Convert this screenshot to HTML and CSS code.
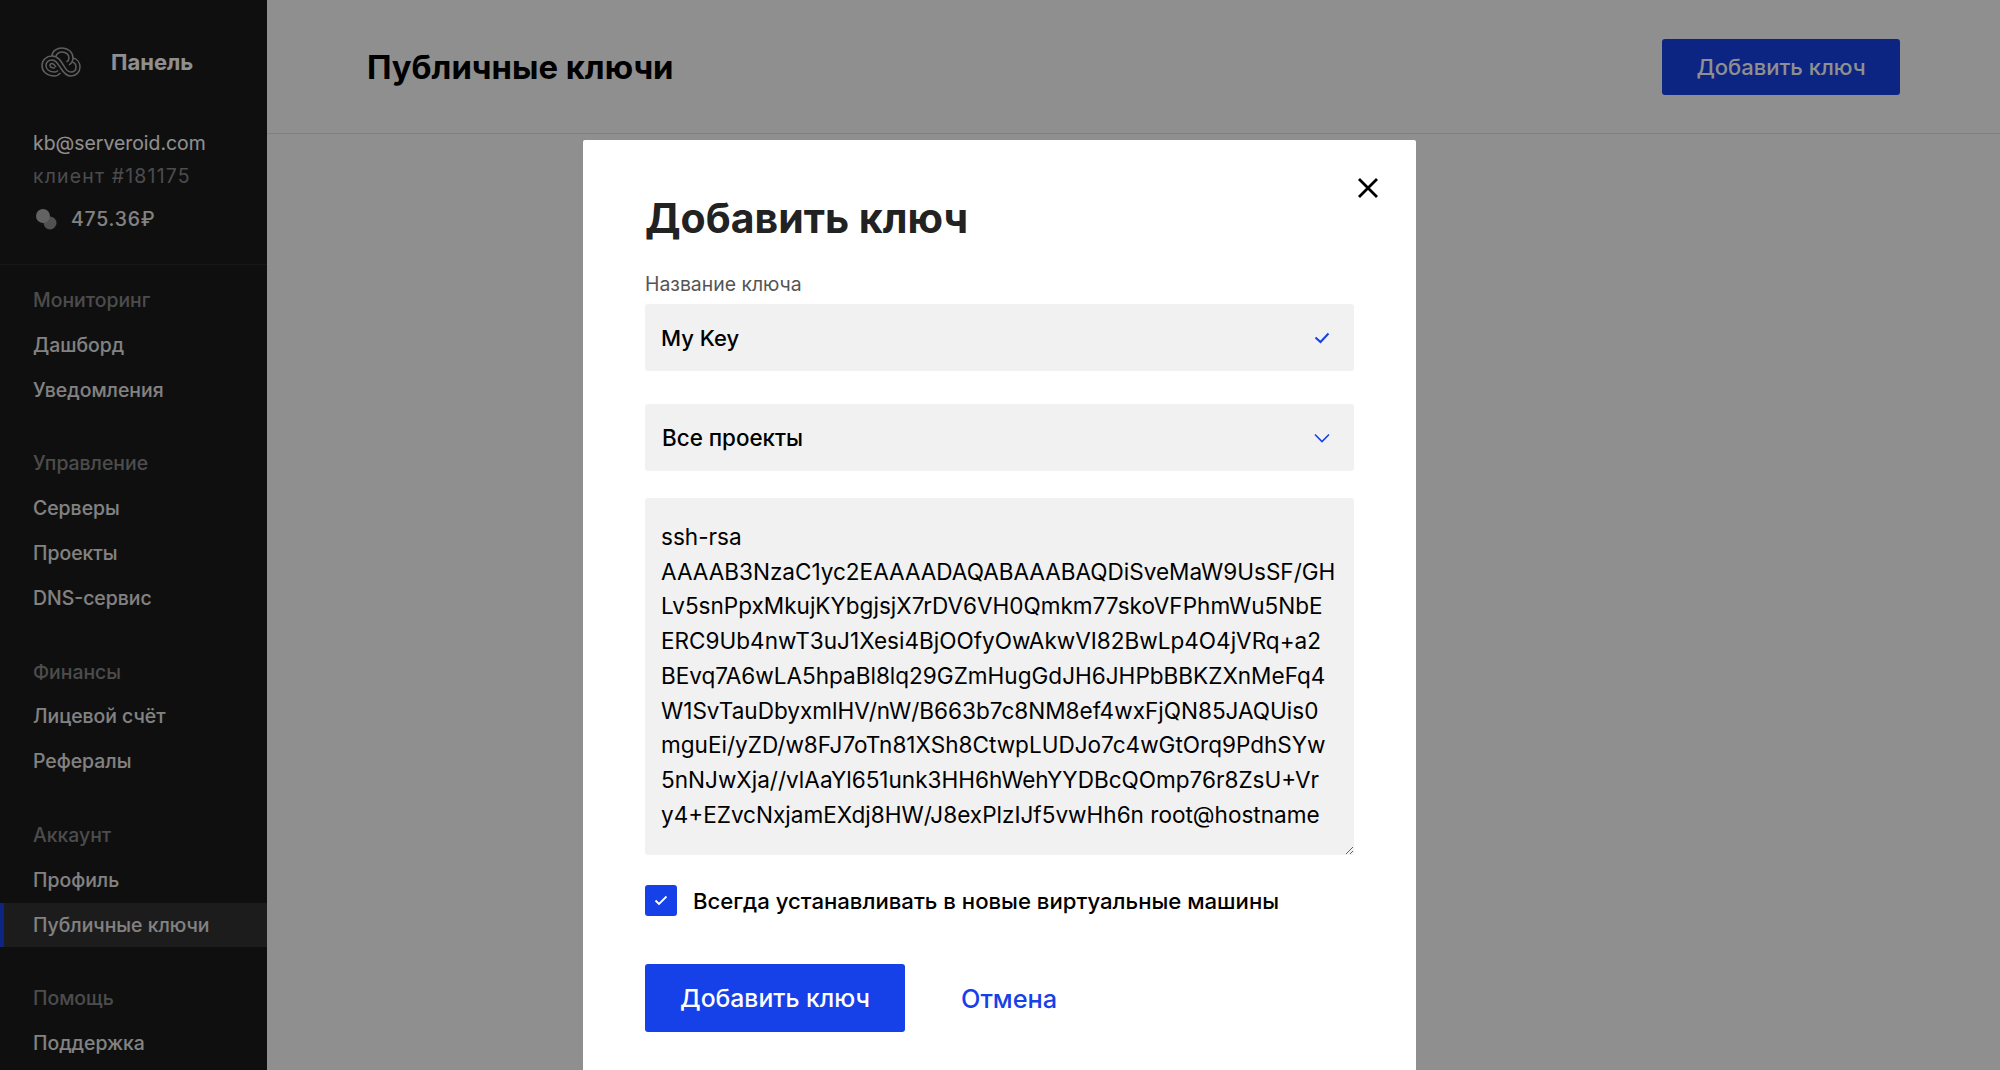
FILE: index.html
```html
<!DOCTYPE html>
<html lang="ru">
<head>
    <meta charset="UTF-8">
    <title>Публичные ключи</title>
    <link rel="stylesheet" href="styles.css">
</head>
<body>
    <aside class="sidebar">
        <div class="brand">
            <svg class="brand-logo" width="40" height="30" viewBox="0 0 40 30" fill="none" stroke="#a8a8a8" stroke-width="1.500">
                <path d="M14 29C5 29 1 24 1 18.500C1 13 5.500 9 11 9C17 9 20 14 23 19C25 23 27 25 30 25C33 25 35 23 35 20C35 17.500 33.500 15.500 31 15"/>
                <path d="M14 25C8 25 5 22 5 18.500C5 15 8 13 11 13C15 13 17 17 20 21.500C23 26.500 26 29 30 29C35 29 39 25 39 20C39 15.500 36 12 32 11"/>
                <path d="M11 9C11 4 16 1 21 1C27 1 32 5 32 11C32 14 30 16.500 28 18"/>
                <path d="M15 9.500C15 7 18 5 21 5C25 5 28 7.500 28 11C28 12.500 27 14 25.500 15"/>
                <path d="M14 29C16 29 18 27.500 19.500 26M14 25C15 25 16 24.500 17 23.500M14 21C10.500 21 9 20 9 18.500C9 17 10 16.500 11 16.500C12.500 16.500 13.500 18 15 20"/>
            </svg>
            <span class="brand-name">Панель</span>
        </div>
        <div class="account">
            <div class="account-mail">kb@serveroid.com</div>
            <div class="account-id">клиент #181175</div>
            <div class="account-balance">
                <svg width="22" height="22" viewBox="0 0 22 22">
                    <circle cx="15" cy="15" r="6.500" fill="#909090"/>
                    <circle cx="8" cy="8" r="7" fill="#b0b0b0"/>
                </svg>
                <span>475.36₽</span>
            </div>
        </div>
        <nav class="menu">
            <div class="menu-title">Мониторинг</div>
            <a class="menu-item">Дашборд</a>
            <a class="menu-item">Уведомления</a>
            <div class="menu-title">Управление</div>
            <a class="menu-item">Серверы</a>
            <a class="menu-item">Проекты</a>
            <a class="menu-item">DNS-сервис</a>
            <div class="menu-title">Финансы</div>
            <a class="menu-item">Лицевой счёт</a>
            <a class="menu-item">Рефералы</a>
            <div class="menu-title">Аккаунт</div>
            <a class="menu-item">Профиль</a>
            <a class="menu-item active">Публичные ключи</a>
            <div class="menu-title">Помощь</div>
            <a class="menu-item">Поддержка</a>
        </nav>
    </aside>

    <main class="content">
        <header class="topbar">
            <h1>Публичные ключи</h1>
            <button type="button" class="btn">Добавить ключ</button>
        </header>
    </main>

    <div class="overlay">
        <div class="modal">
            <button type="button" class="modal-close" aria-label="Закрыть">
                <svg width="22" height="22" viewBox="0 0 22 22" fill="none" stroke="#000" stroke-width="2.800">
                    <path d="M2 2l18 18M20 2L2 20"/>
                </svg>
            </button>
            <h2>Добавить ключ</h2>
            <label class="field-label" for="keyName">Название ключа</label>
            <div class="field">
                <input type="text" id="keyName" class="input" value="My Key">
                <svg class="field-icon" width="16" height="12" viewBox="0 0 16 12" fill="none" stroke="#1640e8" stroke-width="2">
                    <path d="M1.500 5.500l5 4.500 8-8.500"/>
                </svg>
            </div>
            <div class="field field-select">
                <select class="input">
                    <option>Все проекты</option>
                </select>
                <svg class="field-icon" width="16" height="10" viewBox="0 0 16 10" fill="none" stroke="#1640e8" stroke-width="1.600">
                    <path d="M1 1.500l7 7 7-7"/>
                </svg>
            </div>
            <textarea class="input key-text" spellcheck="false">ssh-rsa
AAAAB3NzaC1yc2EAAAADAQABAAABAQDiSveMaW9UsSF/GH
Lv5snPpxMkujKYbgjsjX7rDV6VH0Qmkm77skoVFPhmWu5NbE
ERC9Ub4nwT3uJ1Xesi4BjOOfyOwAkwVI82BwLp4O4jVRq+a2
BEvq7A6wLA5hpaBl8lq29GZmHugGdJH6JHPbBBKZXnMeFq4
W1SvTauDbyxmlHV/nW/B663b7c8NM8ef4wxFjQN85JAQUis0
mguEi/yZD/w8FJ7oTn81XSh8CtwpLUDJo7c4wGtOrq9PdhSYw
5nNJwXja//vlAaYl651unk3HH6hWehYYDBcQOmp76r8ZsU+Vr
y4+EZvcNxjamEXdj8HW/J8exPlzIJf5vwHh6n root@hostname</textarea>
            <label class="check">
                <span class="check-box">
                    <svg width="14" height="11" viewBox="0 0 14 11" fill="none" stroke="#fff" stroke-width="1.800">
                        <path d="M1.500 5.500l3.500 3.500 7.500-7.500"/>
                    </svg>
                </span>
                Всегда устанавливать в новые виртуальные машины
            </label>
            <div class="modal-actions">
                <button type="button" class="btn btn-big">Добавить ключ</button>
                <a class="cancel">Отмена</a>
            </div>
        </div>
    </div>
</body>
</html>
```

FILE: styles.css
```css
* {
    box-sizing: border-box;
}
html, body {
    height: 100%;
}
body {
    margin: 0;
    display: flex;
    height: 1070px;
    overflow: hidden;
    background-color: #fff;
    font-family: Inter, "Noto Sans", sans-serif;
    color: #000;
}

.sidebar {
    width: 267px;
    flex-shrink: 0;
    background-color: #1c1c1c;
    color: #e8e8e8;
    font-size: 19.400px;
    font-weight: 500;
}
.brand {
    height: 124px;
    display: flex;
    align-items: center;
    padding-left: 41px;
}
.brand-logo {
    margin-right: 30px;
}
.brand-name {
    font-size: 22px;
    font-weight: 700;
    color: #fff;
}
.account {
    height: 141px;
    padding-left: 33px;
    border-bottom: 1px solid #2a2a2a;
}
.account-mail {
    line-height: 39px;
    color: #fff;
    font-weight: 400;
}
.account-id {
    line-height: 27px;
    color: #888;
    font-weight: 400;
    letter-spacing: 1.200px;
}
.account-balance {
    display: flex;
    align-items: center;
    gap: 14px;
    margin-top: 17px;
    padding-left: 2px;
    letter-spacing: 0.800px;
}
.menu {
    display: flex;
    flex-direction: column;
    padding-top: 13px;
}
.menu-title {
    height: 44.800px;
    line-height: 44.800px;
    margin-top: 29px;
    padding-left: 33px;
    color: #888;
}
.menu-title:first-child {
    margin-top: 0;
}
.menu-item {
    height: 44.800px;
    line-height: 44.800px;
    padding-left: 33px;
}
.menu-item.active {
    background-color: #333;
    border-left: 4px solid #1640e8;
    padding-left: 29px;
}

.content {
    flex: 1;
}
.topbar {
    height: 134px;
    display: flex;
    align-items: center;
    justify-content: space-between;
    padding: 0 100px;
    border-bottom: 1px solid #e4e4e4;
}
.topbar h1 {
    margin: 0;
    font-size: 32.800px;
    font-weight: 700;
}
.btn {
    width: 238px;
    height: 56px;
    border: none;
    border-radius: 3px;
    background-color: #1640e8;
    color: #fff;
    font-family: inherit;
    font-size: 22px;
    font-weight: 500;
}

.overlay {
    position: fixed;
    top: 0;
    left: 0;
    width: 100%;
    height: 100%;
    display: flex;
    justify-content: center;
    padding: 140px 1px 0 0;
    background-color: rgba(0, 0, 0, 0.44);
}
.modal {
    position: relative;
    width: 833px;
    height: 1000px;
    padding: 53px 62px 0;
    background-color: #fff;
    border-radius: 2px;
}
.modal-close {
    position: absolute;
    top: 37px;
    right: 37px;
    padding: 0;
    border: none;
    background: none;
    line-height: 0;
}
.modal h2 {
    margin: 0 0 28px;
    font-size: 41px;
    line-height: 50px;
    font-weight: 700;
    color: #222;
}
.field-label {
    display: block;
    font-size: 19.400px;
    line-height: 26px;
    margin-bottom: 7px;
    color: #555;
}
.field {
    position: relative;
    margin-bottom: 33px;
}
.field-select {
    margin-bottom: 27px;
}
.field-select .input {
    padding-left: 17px;
    font-size: 22.400px;
}
.field-icon {
    position: absolute;
    right: 24px;
    top: 50%;
    transform: translateY(-50%);
}
.input {
    display: block;
    width: 100%;
    height: 67px;
    padding: 0 16px;
    border: none;
    border-radius: 3px;
    outline: none;
    appearance: none;
    background-color: #f1f1f1;
    font-family: inherit;
    font-size: 22px;
    font-weight: 500;
    color: #000;
}
.key-text {
    height: 357px;
    padding: 22px 16px;
    font-size: 22.550px;
    line-height: 34.700px;
    font-weight: 400;
    white-space: pre;
    overflow: hidden;
    resize: both;
}
.check {
    display: flex;
    align-items: center;
    gap: 16px;
    margin-top: 30px;
    font-size: 22.150px;
    font-weight: 500;
}
.check-box {
    width: 32px;
    height: 31px;
    display: flex;
    align-items: center;
    justify-content: center;
    border-radius: 3px;
    background-color: #1640e8;
}
.modal-actions {
    display: flex;
    align-items: center;
    gap: 56px;
    margin-top: 48px;
}
.btn-big {
    width: 260px;
    height: 68px;
    font-size: 24.700px;
}
.cancel {
    font-size: 25.300px;
    font-weight: 500;
    color: #1640e8;
}
```
